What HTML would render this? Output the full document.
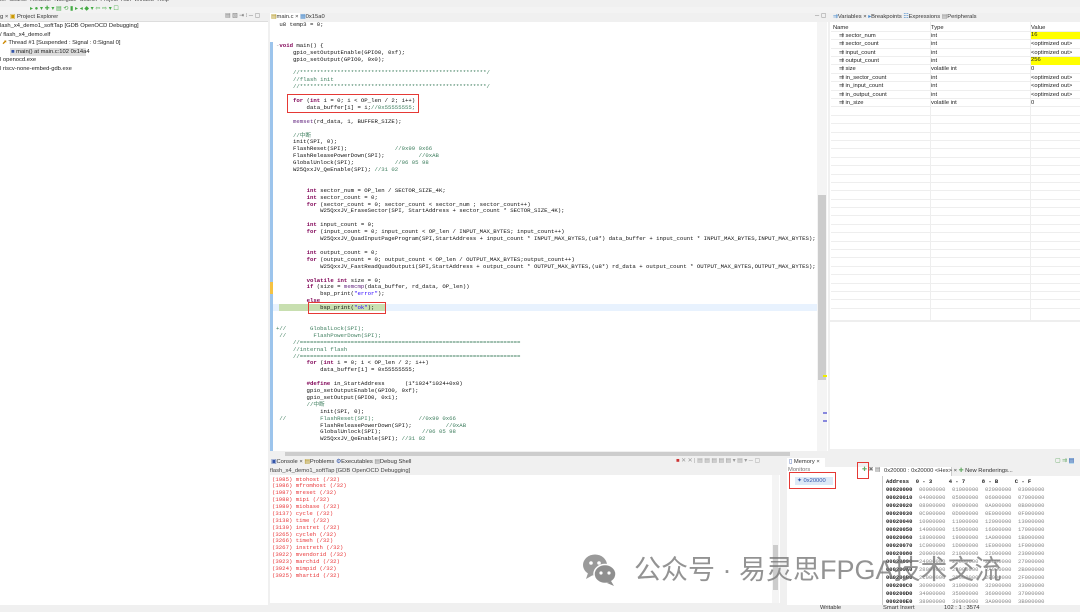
<!DOCTYPE html>
<html><head><meta charset="utf-8"><style>
*{margin:0;padding:0;box-sizing:border-box}
body{width:1080px;height:612px;overflow:hidden;background:#f0f0f0;font-family:"Liberation Sans",sans-serif;position:relative;font-size:5.8px;color:#222}
.a{position:absolute;white-space:pre}
.code{position:absolute;left:276px;top:22px;font-family:"Liberation Mono",monospace;font-size:5.67px;line-height:6.9px;white-space:pre;color:#111}
.k{color:#7f0055;font-weight:bold}.c{color:#3f7f5f}.s{color:#2a00ff}.f{color:#642880}
.tab{position:absolute;font-size:5.8px;color:#333}
.con{position:absolute;left:272px;top:476.5px;font-family:"Liberation Mono",monospace;font-size:5.67px;line-height:6.88px;color:#e8383a;white-space:pre}
.mem{position:absolute;left:886px;top:478px;font-family:"Liberation Mono",monospace;font-size:5.5px;line-height:8px;white-space:pre;color:#888}
.mem b{color:#222}
.vt div{height:8.4px;line-height:8.4px;border-bottom:1px solid #eee;position:relative}
.vt span{position:absolute}
</style></head><body>
<div class="a" style="left:0;top:-3px;font-size:5.6px;color:#444">ler  Source  Refactor  Navigate  Search  Project  Run  Window  Help</div>
<div style="position:absolute;left:0;top:7px;width:1080px;height:6px;background:#f3f3f3"></div>
<div class="a" style="left:30px;top:5px;font-size:6px;color:#4a4">▸ ● ▾ ✚ ▾ ▤ ⟲ ▮ ▸ ◂ ◆ ▾ ⇦ ⇨ ▾ ☐</div>
<div style="position:absolute;left:0;top:13px;width:268px;height:9px;background:#f0f0f0;border-bottom:1px solid #ddd"></div>
<div class="tab" style="left:0;top:14px">g ×  <span style="color:#c90">▣</span> Project Explorer</div>
<div class="a" style="left:225px;top:13px;color:#777">▤ ▧ ⇥ ⁞ ─ ▢</div>
<div style="position:absolute;left:0;top:22px;width:268px;height:583px;background:#fff"></div>
<div class="a" style="left:0;top:23px">lash_x4_demo1_softTap [GDB OpenOCD Debugging]</div>
<div class="a" style="left:0;top:31.5px">/ flash_x4_demo.elf</div>
<div class="a" style="left:2px;top:40px"><span style="color:#c80">⬈</span> Thread #1 [Suspended : Signal : 0:Signal 0]</div>
<div style="position:absolute;left:10px;top:48px;width:76px;height:8px;background:#ddd"></div>
<div class="a" style="left:11px;top:48.5px"><span style="color:#35a">■</span> main() at main.c:102 0x14a4</div>
<div class="a" style="left:0;top:57px">l openocd.exe</div>
<div class="a" style="left:0;top:65.5px">l riscv-none-embed-gdb.exe</div>
<div style="position:absolute;left:270px;top:13px;width:558px;height:9px;background:#f0f0f0"></div>
<div style="position:absolute;left:270px;top:13px;width:30px;height:9px;background:#fff"></div>
<div class="tab" style="left:271px;top:14px"><span style="color:#a80">▤</span>main.c × <span style="color:#48c">▦</span>0x15a0</div>
<div class="a" style="left:815px;top:13px;color:#777">─ ▢</div>
<div style="position:absolute;left:270px;top:22px;width:558px;height:429px;background:#fff"></div>
<div style="position:absolute;left:270px;top:42px;width:3px;height:409px;background:#9cc4ec"></div>
<div style="position:absolute;left:817px;top:22px;width:10px;height:429px;background:#f4f4f4"></div>
<div style="position:absolute;left:818px;top:195px;width:8px;height:185px;background:#ccc"></div>
<div style="position:absolute;left:823px;top:375px;width:4px;height:2px;background:#ee0"></div>
<div style="position:absolute;left:823px;top:412px;width:4px;height:2px;background:#88d"></div>
<div style="position:absolute;left:823px;top:420px;width:4px;height:2px;background:#88d"></div>
<div style="position:absolute;left:270px;top:451px;width:558px;height:6px;background:#f0f0f0"></div>
<div style="position:absolute;left:285px;top:452px;width:505px;height:4px;background:#cdcdcd"></div>
<div style="position:absolute;left:273px;top:304px;width:544px;height:7px;background:#e8f2fe"></div>
<div style="position:absolute;left:279px;top:304px;width:106px;height:7px;background:#c8dfb0"></div>
<div style="position:absolute;left:270px;top:282px;width:3px;height:12px;background:#f5c242"></div>
<pre class="code"><span style="color:#222"> u8 temp3 = 0;</span>


<span style="color:#999">-</span><span class="k">void</span> main() {
     gpio_setOutputEnable(GPIO0, 0xf);
     gpio_setOutput(GPIO0, 0x0);

     <span class="c">//*******************************************************/</span>
     <span class="c">//flash init</span>
     <span class="c">//*******************************************************/</span>

     <span class="k">for</span> (<span class="k">int</span> i = 0; i &lt; OP_len / 2; i++)
         data_buffer[i] = i;<span class="c">//0x55555555;</span>

     <span class="f">memset</span>(rd_data, 1, BUFFER_SIZE);

     <span class="c">//中断</span>
     init(SPI, 0);
     FlashReset(SPI);              <span class="c">//0x99 0x66</span>
     FlashReleasePowerDown(SPI);          <span class="c">//0xAB</span>
     GlobalUnlock(SPI);            <span class="c">//06 05 98</span>
     W25QxxJV_QeEnable(SPI); <span class="c">//31 02</span>


         <span class="k">int</span> sector_num = OP_len / SECTOR_SIZE_4K;
         <span class="k">int</span> sector_count = 0;
         <span class="k">for</span> (sector_count = 0; sector_count &lt; sector_num ; sector_count++)
             W25QxxJV_EraseSector(SPI, StartAddress + sector_count * SECTOR_SIZE_4K);

         <span class="k">int</span> input_count = 0;
         <span class="k">for</span> (input_count = 0; input_count &lt; OP_len / INPUT_MAX_BYTES; input_count++)
             W25QxxJV_QuadInputPageProgram(SPI,StartAddress + input_count * INPUT_MAX_BYTES,(u8*) data_buffer + input_count * INPUT_MAX_BYTES,INPUT_MAX_BYTES);

         <span class="k">int</span> output_count = 0;
         <span class="k">for</span> (output_count = 0; output_count &lt; OP_len / OUTPUT_MAX_BYTES;output_count++)
             W25QxxJV_FastReadQuadOutput1(SPI,StartAddress + output_count * OUTPUT_MAX_BYTES,(u8*) rd_data + output_count * OUTPUT_MAX_BYTES,OUTPUT_MAX_BYTES);

         <span class="k">volatile int</span> size = 0;
         <span class="k">if</span> (size = <span class="f">memcmp</span>(data_buffer, rd_data, OP_len))
             bsp_print(<span class="s">"error"</span>);
         <span class="k">else</span>
             bsp_print(<span class="s">"ok"</span>);


<span class="c">+//       GlobalLock(SPI);
 //        FlashPowerDown(SPI);
     //=================================================================
     //internal flash
     //=================================================================</span>
         <span class="k">for</span> (<span class="k">int</span> i = 0; i &lt; OP_len / 2; i++)
             data_buffer[i] = 0x55555555;

         <span class="k">#define</span> in_StartAddress      (1*1024*1024+0x0)
         gpio_setOutputEnable(GPIO0, 0xf);
         gpio_setOutput(GPIO0, 0x1);
         <span class="c">//中断</span>
             init(SPI, 0);
 <span class="c">//          FlashReset(SPI);             //0x99 0x66</span>
             FlashReleasePowerDown(SPI);          <span class="c">//0xAB</span>
             GlobalUnlock(SPI);            <span class="c">//06 05 98</span>
             W25QxxJV_QeEnable(SPI); <span class="c">//31 02</span></pre>
<div style="position:absolute;left:287px;top:94px;width:132px;height:19px;border:1.5px solid #e53935"></div>
<div style="position:absolute;left:308px;top:302px;width:78px;height:12px;border:1.5px solid #e53935"></div>
<div style="position:absolute;left:830px;top:13px;width:250px;height:9px;background:#f0f0f0"></div>
<div class="tab" style="left:833px;top:14px"><span style="color:#48c">⇉</span>Variables × <span style="color:#48c">▸</span>Breakpoints <span style="color:#48c">☷</span>Expressions <span style="color:#888">▤</span>Peripherals</div>
<div style="position:absolute;left:830px;top:22px;width:250px;height:429px;background:#fff"></div>
<div class="vt" style="position:absolute;left:831px;top:23.5px;width:249px">
<div><span style="left:2px">Name</span><span style="left:100px">Type</span><span style="left:200px">Value</span></div>
<div><span style="left:8px">⇉ sector_num</span><span style="left:100px">int</span><span style="left:200px;background:#ff0;width:49px;height:7.5px;line-height:7.5px">16</span></div>
<div><span style="left:8px">⇉ sector_count</span><span style="left:100px">int</span><span style="left:200px">&lt;optimized out&gt;</span></div>
<div><span style="left:8px">⇉ input_count</span><span style="left:100px">int</span><span style="left:200px">&lt;optimized out&gt;</span></div>
<div><span style="left:8px">⇉ output_count</span><span style="left:100px">int</span><span style="left:200px;background:#ff0;width:49px;height:7.5px;line-height:7.5px">256</span></div>
<div><span style="left:8px">⇉ size</span><span style="left:100px">volatile int</span><span style="left:200px">0</span></div>
<div><span style="left:8px">⇉ in_sector_count</span><span style="left:100px">int</span><span style="left:200px">&lt;optimized out&gt;</span></div>
<div><span style="left:8px">⇉ in_input_count</span><span style="left:100px">int</span><span style="left:200px">&lt;optimized out&gt;</span></div>
<div><span style="left:8px">⇉ in_output_count</span><span style="left:100px">int</span><span style="left:200px">&lt;optimized out&gt;</span></div>
<div><span style="left:8px">⇉ in_size</span><span style="left:100px">volatile int</span><span style="left:200px">0</span></div>
<div></div><div></div><div></div><div></div><div></div><div></div><div></div><div></div><div></div><div></div><div></div><div></div><div></div><div></div><div></div><div></div><div></div><div></div><div></div><div></div><div></div><div></div><div></div><div></div>
</div>
<div style="position:absolute;left:930px;top:22px;width:1px;height:298px;background:#eee"></div>
<div style="position:absolute;left:1030px;top:22px;width:1px;height:298px;background:#eee"></div>
<div style="position:absolute;left:830px;top:320px;width:250px;height:2px;background:#eee"></div>
<div style="position:absolute;left:830px;top:449px;width:250px;height:6px;background:#f0f0f0"></div>
<div style="position:absolute;left:270px;top:458px;width:510px;height:9px;background:#f0f0f0"></div>
<div class="tab" style="left:271px;top:459px"><span style="color:#35a">▣</span>Console × <span style="color:#a80">▤</span>Problems <span style="color:#35a">⚙</span>Executables <span style="color:#888">▤</span>Debug Shell</div>
<div class="a" style="left:676px;top:458px;color:#c33">■ <span style="color:#999">✕ ✕ | ▤ ▤ ▤ ▤ ▤ ▾ ▤ ▾ ─ ▢</span></div>
<div class="a" style="left:270px;top:467.5px;color:#444">flash_x4_demo1_softTap [GDB OpenOCD Debugging]</div>
<div style="position:absolute;left:270px;top:475px;width:510px;height:128px;background:#fff"></div>
<pre class="con">(1985) mtohost (/32)
(1986) mfromhost (/32)
(1987) mreset (/32)
(1988) mipi (/32)
(1989) miobase (/32)
(3137) cycle (/32)
(3138) time (/32)
(3139) instret (/32)
(3265) cycleh (/32)
(3266) timeh (/32)
(3267) instreth (/32)
(3922) mvendorid (/32)
(3923) marchid (/32)
(3924) mimpid (/32)
(3925) mhartid (/32)</pre>
<div style="position:absolute;left:772px;top:475px;width:7px;height:128px;background:#f4f4f4"></div>
<div style="position:absolute;left:773px;top:545px;width:5px;height:45px;background:#ccc"></div>
<div style="position:absolute;left:787px;top:458px;width:293px;height:9px;background:#f0f0f0"></div>
<div style="position:absolute;left:787px;top:458px;width:38px;height:9px;background:#fff"></div>
<div class="tab" style="left:789px;top:459px"><span style="color:#35a">▯</span> Memory ×</div>
<div class="a" style="left:1055px;top:458px;color:#6a6">▢ ⇉ <span style="background:#bde;color:#35a">▤</span></div>
<div style="position:absolute;left:787px;top:467px;width:95px;height:138px;background:#fff"></div>
<div class="a" style="left:788px;top:467px;color:#777">Monitors</div>
<div style="position:absolute;left:795px;top:477px;width:38px;height:8px;background:#ddeaf7"></div>
<div class="a" style="left:797px;top:478px;color:#35a">✦ 0x20000</div>
<div style="position:absolute;left:789px;top:472px;width:47px;height:17px;border:1.5px solid #e53935"></div>
<div class="a" style="left:862px;top:467px;color:#6a6">✚ <span style="color:#777">✖ ▤</span></div>
<div style="position:absolute;left:857px;top:462px;width:12px;height:17px;border:1.5px solid #e53935"></div>
<div style="position:absolute;left:882px;top:467px;width:198px;height:9px;background:#f0f0f0"></div>
<div style="position:absolute;left:882px;top:467px;width:70px;height:9px;background:#fff;border-right:1px solid #ccc"></div>
<div class="tab" style="left:884px;top:468px">0x20000 : 0x20000 &lt;Hex&gt; × <span style="color:#6a6">✚</span> New Renderings...</div>
<div style="position:absolute;left:882px;top:476px;width:198px;height:129px;background:#fff;border-left:1px solid #ccc"></div>
<pre class="mem"><b>Address  0 - 3     4 - 7     8 - B     C - F</b>
<b>00020000</b>  00000000  01000000  02000000  03000000
<b>00020010</b>  04000000  05000000  06000000  07000000
<b>00020020</b>  08000000  09000000  0A000000  0B000000
<b>00020030</b>  0C000000  0D000000  0E000000  0F000000
<b>00020040</b>  10000000  11000000  12000000  13000000
<b>00020050</b>  14000000  15000000  16000000  17000000
<b>00020060</b>  18000000  19000000  1A000000  1B000000
<b>00020070</b>  1C000000  1D000000  1E000000  1F000000
<b>00020080</b>  20000000  21000000  22000000  23000000
<b>00020090</b>  24000000  25000000  26000000  27000000
<b>000200A0</b>  28000000  29000000  2A000000  2B000000
<b>000200B0</b>  2C000000  2D000000  2E000000  2F000000
<b>000200C0</b>  30000000  31000000  32000000  33000000
<b>000200D0</b>  34000000  35000000  36000000  37000000
<b>000200E0</b>  38000000  39000000  3A000000  3B000000</pre>
<div style="position:absolute;left:0;top:605px;width:1080px;height:7px;background:#f0f0f0"></div>
<div class="a" style="left:820px;top:605px;color:#333">Writable</div>
<div class="a" style="left:883px;top:605px;color:#333">Smart Insert</div>
<div class="a" style="left:944px;top:605px;color:#333">102 : 1 : 3574</div>
<svg style="position:absolute;left:582px;top:552px" width="36" height="36" viewBox="0 0 36 36">
<ellipse cx="13" cy="13" rx="12" ry="10.5" fill="#9a9a9a"/><path d="M6 21 L4 27 L11 23Z" fill="#9a9a9a"/>
<circle cx="9" cy="11" r="1.8" fill="#fff"/><circle cx="17" cy="11" r="1.8" fill="#fff"/>
<ellipse cx="23" cy="22" rx="11" ry="9.5" fill="#8f8f8f" stroke="#fff" stroke-width="1.5"/><path d="M29 29 L32 34 L25 31Z" fill="#8f8f8f"/>
<circle cx="19" cy="21" r="1.6" fill="#fff"/><circle cx="27" cy="21" r="1.6" fill="#fff"/></svg>
<div class="a" style="left:634px;top:550px;font-size:27px;color:rgba(120,120,120,0.8);font-family:'Liberation Sans','Noto Sans CJK SC',sans-serif;line-height:40px">公众号 · 易灵思FPGA技术交流</div>
</body></html>
